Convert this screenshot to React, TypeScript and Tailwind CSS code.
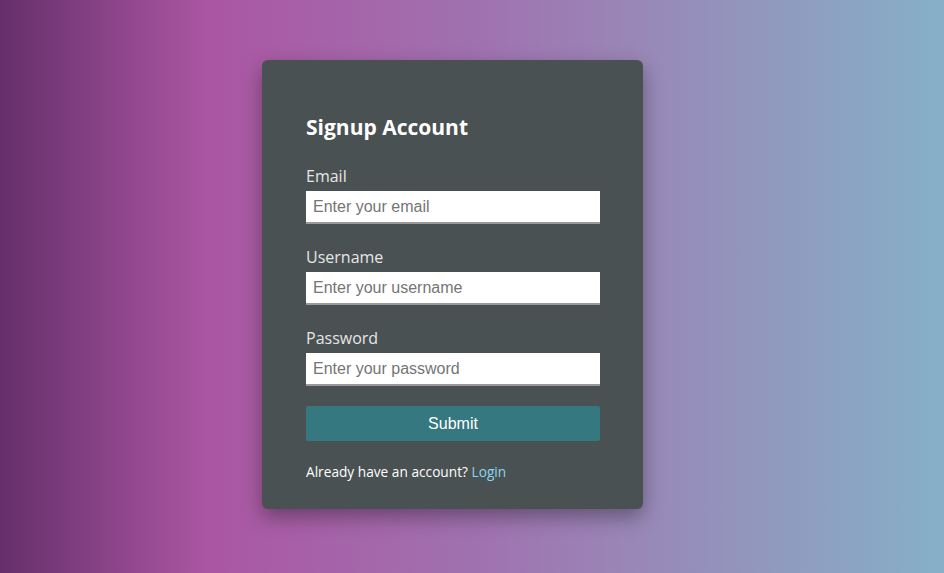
export default function App() {
  const fields = [
    { label: 'Email', type: 'email', placeholder: 'Enter your email' },
    { label: 'Username', type: 'text', placeholder: 'Enter your username' },
    { label: 'Password', type: 'password', placeholder: 'Enter your password' },
  ];

  return (
    <div className="h-screen w-full flex items-center justify-center pr-[39px] pb-[4px] bg-[linear-gradient(90deg,#652f6b_0%,#ab56a2_22%,#a071af_50%,#9a84b6_65%,#86b0c8_100%)]">
      <div
        className="w-[381px] h-[449px] rounded-md bg-[#495152] pl-[44px] pr-[43px] pt-[52px] shadow-[0_8px_20px_rgba(0,0,0,0.35)]"
        style={{ fontFamily: '"Open Sans", "Noto Sans", sans-serif' }}
      >
        <h1 className="text-[21px] font-bold text-white leading-[30px] mb-[22px]">Signup Account</h1>

        <form className="flex flex-col" onSubmit={(e) => e.preventDefault()}>
          {fields.map((f) => (
            <div key={f.label} className="flex flex-col mb-[21px]">
              <label className="text-[16px] leading-[24px] text-[#e6e6e6] mb-[3px]">{f.label}</label>
              <input
                type={f.type}
                placeholder={f.placeholder}
                className="h-[33px] w-full bg-white px-[7px] text-[16px] text-[#222] placeholder:text-[#757575] border-b-2 border-[#9a9a9a] outline-none"
                style={{ fontFamily: '"Liberation Sans", Arial, sans-serif' }}
              />
            </div>
          ))}

          <button
            type="submit"
            className="-mt-[1px] h-[35px] w-full rounded-[2px] bg-[#357880] text-white text-[16px]"
            style={{ fontFamily: '"Liberation Sans", Arial, sans-serif' }}
          >
            Submit
          </button>

          <p className="mt-[21px] text-[13.7px] leading-[20px] text-white">
            Already have an account? <a href="#" className="text-[#8bd6ef]">Login</a>
          </p>
        </form>
      </div>
    </div>
  );
}
